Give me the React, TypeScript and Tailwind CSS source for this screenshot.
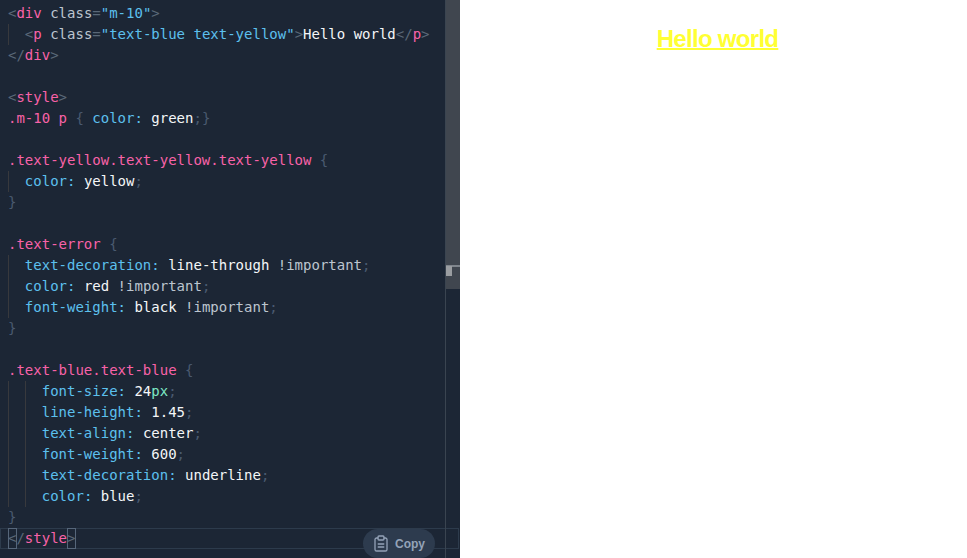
const mono = "font-['DejaVu_Sans_Mono','Liberation_Mono',monospace]";

type Tone = "pink" | "cyan" | "white" | "dim" | "gray" | "light" | "teal";

const tones: Record<Tone, string> = {
  pink: "text-[#f862a8]",
  cyan: "text-[#5cc0ee]",
  white: "text-[#f4f6f8]",
  dim: "text-[#4a5a70]",
  gray: "text-[#5a6878]",
  light: "text-[#bcc5cf]",
  teal: "text-[#7ce8c4]",
};

type Token = [Tone, string];

interface CodeLineProps {
  indent?: number;
  tokens?: Token[];
}

const CodeLine = ({ indent = 0, tokens = [] }: CodeLineProps) => (
  <div className="flex h-[21px] leading-[21px] whitespace-pre">
    {Array.from({ length: indent }).map((_, i) => (
      <span key={i} className="w-[16.86px] shrink-0 border-l border-[#38393d]" />
    ))}
    <span>
      {tokens.map(([tone, text], i) => (
        <span key={i} className={tones[tone]}>{text}</span>
      ))}
    </span>
  </div>
);

const decl = (prop: string, value: string, extra?: Token[]): Token[] => [
  ["cyan", prop],
  ["cyan", ":"],
  ["white", " " + value],
  ...(extra ?? []),
  ["dim", ";"],
];

const important: Token[] = [["light", " !important"]];

const lines: CodeLineProps[] = [
  { tokens: [["gray", "<"], ["pink", "div"], ["light", " class"], ["gray", "="], ["cyan", '"m-10"'], ["gray", ">"]] },
  { indent: 1, tokens: [["gray", "<"], ["pink", "p"], ["light", " class"], ["gray", "="], ["cyan", '"text-blue text-yellow"'], ["gray", ">"], ["white", "Hello world"], ["gray", "</"], ["pink", "p"], ["gray", ">"]] },
  { tokens: [["gray", "</"], ["pink", "div"], ["gray", ">"]] },
  {},
  { tokens: [["gray", "<"], ["pink", "style"], ["gray", ">"]] },
  { tokens: [["pink", ".m-10 p"], ["dim", " { "], ["cyan", "color:"], ["white", " green"], ["dim", ";}"]] },
  {},
  { tokens: [["pink", ".text-yellow.text-yellow.text-yellow"], ["dim", " {"]] },
  { indent: 1, tokens: decl("color", "yellow") },
  { tokens: [["dim", "}"]] },
  {},
  { tokens: [["pink", ".text-error"], ["dim", " {"]] },
  { indent: 1, tokens: decl("text-decoration", "line-through", important) },
  { indent: 1, tokens: decl("color", "red", important) },
  { indent: 1, tokens: decl("font-weight", "black", important) },
  { tokens: [["dim", "}"]] },
  {},
  { tokens: [["pink", ".text-blue.text-blue"], ["dim", " {"]] },
  { indent: 2, tokens: [["cyan", "font-size:"], ["white", " 24"], ["teal", "px"], ["dim", ";"]] },
  { indent: 2, tokens: decl("line-height", "1.45") },
  { indent: 2, tokens: decl("text-align", "center") },
  { indent: 2, tokens: decl("font-weight", "600") },
  { indent: 2, tokens: decl("text-decoration", "underline") },
  { indent: 2, tokens: decl("color", "blue") },
  { tokens: [["dim", "}"]] },
];

const ClipboardIcon = () => (
  <svg width="16" height="17" viewBox="0 0 16 17" fill="none" stroke="#94a3b8" strokeWidth="1.3" strokeLinecap="round" strokeLinejoin="round">
    <path d="M5 3H3.6A1.6 1.6 0 0 0 2 4.6v9.8A1.6 1.6 0 0 0 3.6 16h8.8a1.6 1.6 0 0 0 1.6-1.6V4.6A1.6 1.6 0 0 0 12.4 3H11" />
    <rect x="5" y="1" width="6" height="4" rx="1" />
    <path d="M5.2 9h5.6M5.2 12h5.6" />
  </svg>
);

export default function App() {
  return (
    <div className="flex h-[558px] w-[967px] overflow-hidden bg-white">
      {/* 에디터 */}
      <div className={`relative h-full w-[460px] shrink-0 overflow-hidden bg-[#1c2635] pl-2 pt-[3px] text-[14px] ${mono}`}>
        {lines.map((line, i) => (
          <CodeLine key={i} {...line} />
        ))}
        {/* active line */}
        <div className="flex h-[21px] leading-[21px] whitespace-pre">
          <span className="text-[#5a6878]">{"</"}</span>
          <span className="text-[#f862a8]">style</span>
          <span className="text-[#5a6878]">{">"}</span>
        </div>

        <div className="absolute left-0 top-[528px] h-[21px] w-[459px] border border-[#2d3b4c]" />
        <div className="absolute left-2 top-[528px] h-[21px] w-[9px] border border-[#56667a]" />
        <div className="absolute left-[67px] top-[528px] h-[21px] w-[9px] border border-[#56667a]" />

        {/* scrollbar */}
        <div className="absolute right-0 top-0 h-full w-[15px] border-l border-[#3a4450]">
          <div className="relative h-[289px] bg-[#40464f]">
            <div className="absolute left-0 top-[265px] h-[2px] w-full bg-[#7f858c]" />
            <div className="absolute left-0 top-[266px] h-[10px] w-[6px] bg-[#9a9da1]" />
          </div>
        </div>

        {/* copy */}
        <button className="absolute left-[363px] top-[529px] flex h-[29px] w-[72px] items-center justify-center gap-[6px] rounded-full bg-[#2d3b4e] font-['Liberation_Sans',sans-serif] text-[12px] font-bold text-[#94a3b8]">
          <ClipboardIcon />
          Copy
        </button>
      </div>

      {/* 미리보기 */}
      <div className="flex-1 pl-2 pt-[22px] text-center font-['Liberation_Sans',sans-serif]">
        <p className="text-[24px] leading-[1.45] font-bold tracking-[-0.7px] text-[#ffff33] underline decoration-2">Hello world</p>
      </div>
    </div>
  );
}
